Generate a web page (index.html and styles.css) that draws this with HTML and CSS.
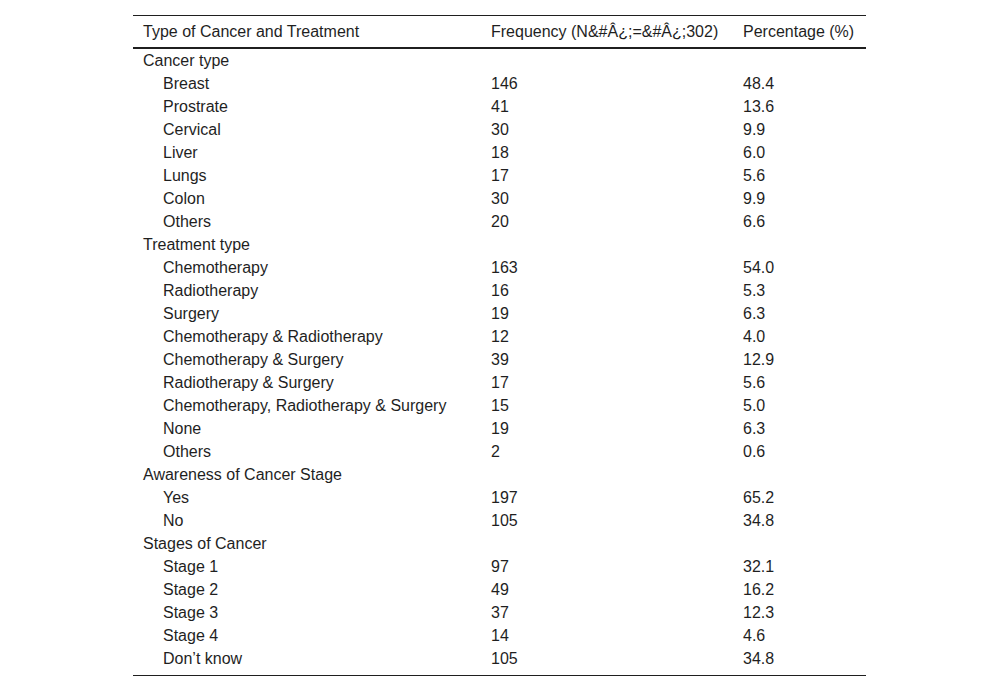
FILE: index.html
```html
<!DOCTYPE html>
<html>
<head>
<meta charset="utf-8">
<link rel="stylesheet" href="styles.css">
</head>
<body>
<div class="wrap">
<table class="data">
<colgroup><col class="c1"><col class="c2"><col class="c3"></colgroup>
<thead>
<tr><th>Type of Cancer and Treatment</th><th>Frequency (N&amp;#Â¿;=&amp;#Â¿;302)</th><th>Percentage (%)</th></tr>
</thead>
<tbody>
<tr><td>Cancer type</td><td></td><td></td></tr>
<tr><td class="ind">Breast</td><td>146</td><td>48.4</td></tr>
<tr><td class="ind">Prostrate</td><td>41</td><td>13.6</td></tr>
<tr><td class="ind">Cervical</td><td>30</td><td>9.9</td></tr>
<tr><td class="ind">Liver</td><td>18</td><td>6.0</td></tr>
<tr><td class="ind">Lungs</td><td>17</td><td>5.6</td></tr>
<tr><td class="ind">Colon</td><td>30</td><td>9.9</td></tr>
<tr><td class="ind">Others</td><td>20</td><td>6.6</td></tr>
<tr><td>Treatment type</td><td></td><td></td></tr>
<tr><td class="ind">Chemotherapy</td><td>163</td><td>54.0</td></tr>
<tr><td class="ind">Radiotherapy</td><td>16</td><td>5.3</td></tr>
<tr><td class="ind">Surgery</td><td>19</td><td>6.3</td></tr>
<tr><td class="ind">Chemotherapy &amp; Radiotherapy</td><td>12</td><td>4.0</td></tr>
<tr><td class="ind">Chemotherapy &amp; Surgery</td><td>39</td><td>12.9</td></tr>
<tr><td class="ind">Radiotherapy &amp; Surgery</td><td>17</td><td>5.6</td></tr>
<tr><td class="ind">Chemotherapy, Radiotherapy &amp; Surgery</td><td>15</td><td>5.0</td></tr>
<tr><td class="ind">None</td><td>19</td><td>6.3</td></tr>
<tr><td class="ind">Others</td><td>2</td><td>0.6</td></tr>
<tr><td>Awareness of Cancer Stage</td><td></td><td></td></tr>
<tr><td class="ind">Yes</td><td>197</td><td>65.2</td></tr>
<tr><td class="ind">No</td><td>105</td><td>34.8</td></tr>
<tr><td>Stages of Cancer</td><td></td><td></td></tr>
<tr><td class="ind">Stage 1</td><td>97</td><td>32.1</td></tr>
<tr><td class="ind">Stage 2</td><td>49</td><td>16.2</td></tr>
<tr><td class="ind">Stage 3</td><td>37</td><td>12.3</td></tr>
<tr><td class="ind">Stage 4</td><td>14</td><td>4.6</td></tr>
<tr class="last"><td class="ind">Don’t know</td><td>105</td><td>34.8</td></tr>
</tbody>
</table>
</div>
</body>
</html>
```
FILE: styles.css
```css
html, body {
  margin: 0;
  padding: 0;
  background: #fff;
}
.wrap {
  padding: 15px 0 0 133px;
}
.data {
  width: 733px;
  border-collapse: collapse;
  table-layout: fixed;
  font-family: "Liberation Sans", Arial, sans-serif;
  font-size: 16px;
  color: #1f1f1f;
  border-top: 1px solid #1f1f1f;
  border-bottom: 1px solid #1f1f1f;
}
.c1 { width: 348px; }
.c2 { width: 252px; }
.c3 { width: 133px; }
.data th {
  font-weight: normal;
  text-align: left;
  height: 31px;
  padding: 0 10px;
  line-height: 18px;
  border-bottom: 2px solid #1f1f1f;
  vertical-align: middle;
  white-space: nowrap;
}
.data td {
  height: 23px;
  padding: 0 10px;
  line-height: 18px;
  vertical-align: middle;
  white-space: nowrap;
}
.data td.ind {
  padding-left: 30px;
}
.data tr.last td {
  height: 28px;
  padding-bottom: 4px;
  box-sizing: border-box;
}
```
